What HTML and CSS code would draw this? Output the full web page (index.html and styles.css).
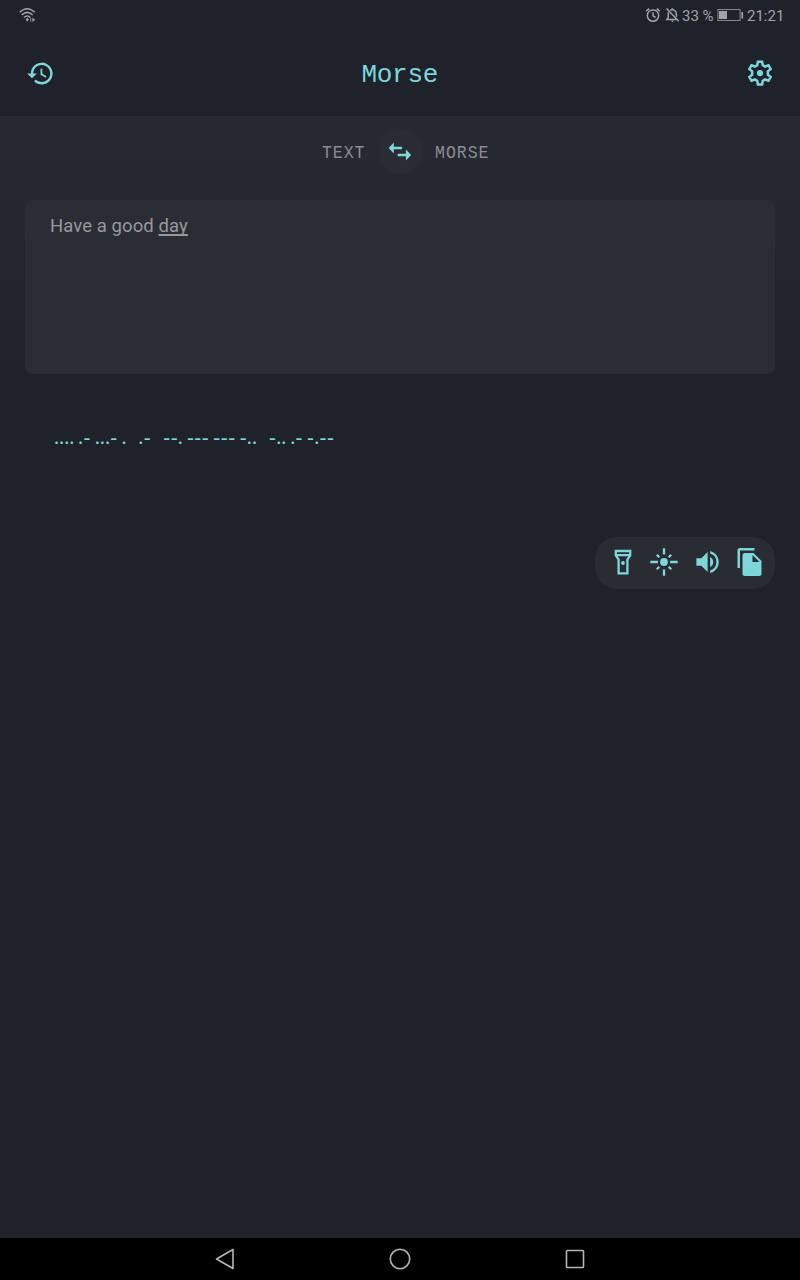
FILE: index.html
```
<!DOCTYPE html>
<html lang="en">
<head>
<meta charset="utf-8">
<title>Morse</title>
<link rel="stylesheet" href="styles.css">
</head>
<body>
<div class="screen">
  <div class="status">
    <svg class="wifi" width="20" height="18" viewBox="0 0 20 18" fill="none" stroke="currentColor" stroke-width="1.5"><path d="M1.600 6.300Q9.200-.8 16.800 6.300M3.700 9Q9.200 3.800 14.700 9M6 11.500Q9.200 8.600 12.400 11.500"/><path d="M7.600 13.600l1.600-1.900 1.800 1.900-1.800 1.900zM14.400 11.600l2.800 2.200-2.800 2.200z" fill="currentColor" stroke="none"/><path d="M12.800 12v3.800" stroke-width=".8"/></svg>
    <div class="status-right">
      <svg width="16" height="16" viewBox="0 0 16 16" fill="none" stroke="currentColor" stroke-width="1.500"><circle cx="8" cy="8.600" r="5.700"/><path d="M8 5.200v3.700l2.600 1.600M1.200 4.100l3-2.500M14.800 4.100l-3-2.500"/></svg>
      <svg class="bell" width="15" height="16" viewBox="0 0 15 16" fill="none" stroke="currentColor" stroke-width="1.500"><path d="M1.500 1.500l12.300 12.800M3.300 5.300v5.200l-1.500 2h10.400M5.200 3.300Q7.300 2 9.500 3.300 11.400 4.500 11.400 7v2.800M7.300 1.200v1.600"/><path d="M5.800 13.600h3.200l-1.600 1.700z" fill="currentColor" stroke="none"/></svg>
      <span class="percent">33 %</span>
      <svg class="battery" width="27" height="12" viewBox="0 0 27 12"><rect x=".9" y=".5" width="22.200" height="11" fill="none" stroke="currentColor" stroke-width="1" opacity=".8"/><path d="M2 2h8v8H2zM24.400 3h1.700v6.500h-1.700z" fill="currentColor"/></svg>
      <span class="time">21:21</span>
    </div>
  </div>
  <header class="bar">
    <svg width="29" height="29" viewBox="0 0 24 24" fill="currentColor"><path d="M13 3a9 9 0 0 0-9 9H1l3.890 3.890.07.14L9 12H6a7 7 0 1 1 2.060 4.940l-1.420 1.420A9 9 0 1 0 13 3zm-1 5v5l4.280 2.540.72-1.210-3.500-2.080V8z"/></svg>
    <h1 class="title">Morse</h1>
    <svg width="30" height="30" viewBox="0 0 24 24" fill="none" stroke="currentColor"><path d="M10.300 2.900h3.400l.5 2.800 1.900 1.100 2.700-1 1.700 3-2.200 1.800v2.800l2.200 1.800-1.700 3-2.700-1-1.900 1.100-.5 2.800h-3.400l-.5-2.800-1.900-1.100-2.700 1-1.700-3 2.200-1.800v-2.800L3.500 8.800l1.700-3 2.700 1 1.900-1.100z" stroke-width="2"/><circle cx="12" cy="12" r="2.500" fill="currentColor" stroke="none"/></svg>
  </header>
  <main class="main">
    <div class="direction">
      <span class="label from">TEXT</span>
      <span class="swap"><svg width="24" height="20" viewBox="0 0 24 20" fill="currentColor"><path d="M.6 6L5.800 .5v4.200h8.200v2.600H5.800v4.200zM23.100 13L17.900 7.500v4.200H9.700v2.600h8.200v4.200z"/></svg></span>
      <span class="label to">MORSE</span>
    </div>
    <div class="input"><span class="words">Have a good <span class="composing">day</span></span></div>
    <div class="output">.... .- ...- .   .-   --. --- --- -..   -.. .- -.--</div>
    <div class="actions">
      <svg width="28" height="28" viewBox="0 0 28 28" fill="none" stroke="currentColor" stroke-width="2.300"><path d="M6.800 3h14.400v4.300l-2.800 4.200v13.800H9.600V11.500L6.800 7.300zM6.800 7.200h14.400"/><circle cx="14" cy="15" r="1.900" fill="currentColor" stroke="none"/></svg>
      <svg width="28" height="28" viewBox="0 0 28 28" fill="none" stroke="currentColor" stroke-width="2.300"><circle cx="14" cy="14" r="3.900" fill="currentColor" stroke="none"/><path d="M14 .3V6.500M14 21.500v6.200M.3 14H8M20 14h7.700M6.800 6.800l2.500 2.500M18.700 18.700l2.500 2.500M21.200 6.800l-2.500 2.500M9.300 18.700l-2.500 2.500"/></svg>
      <svg width="30" height="30" viewBox="0 0 24 24" fill="currentColor"><path d="M3.500 9v6h4l5 5V4l-5 5zM17 12a4.500 4.500 0 0 0-2.500-4.030v8.050A4.500 4.500 0 0 0 17 12zM14.500 3.230v2.060a7 7 0 0 1 0 13.420v2.060a9 9 0 0 0 0-17.540z"/></svg>
      <svg width="28" height="30" viewBox="0 0 28 30" fill="currentColor"><path d="M1.500 21V3.500A2.500 2.500 0 0 1 4 1h14.500v2.500H4V21zM9 6h8.500l8 8v12.500A2.500 2.500 0 0 1 23 29H9a2.500 2.500 0 0 1-2.500-2.500v-18A2.500 2.500 0 0 1 9 6zM16.500 8v7h7z" fill-rule="evenodd"/></svg>
    </div>
  </main>
  <nav class="nav">
    <svg width="22" height="24" viewBox="0 0 22 24"><path d="M19 2.500v19L2.500 12z"/></svg>
    <svg width="24" height="24" viewBox="0 0 24 24"><circle cx="12" cy="12" r="9.700"/></svg>
    <svg width="22" height="24" viewBox="0 0 22 24"><rect x="2.500" y="3.500" width="17" height="17" rx=".8"/></svg>
  </nav>
</div>
</body>
</html>
```
FILE: styles.css
```
* { box-sizing: border-box; }
body { margin: 0; background: #1f222a; }
svg { display: block; flex: none; }
.screen {
  width: 800px;
  height: 1280px;
  display: flex;
  flex-direction: column;
  background: #1f222a;
  color: #7dd6d9;
}
.status {
  height: 30px;
  display: flex;
  justify-content: space-between;
  align-items: center;
  padding: 0 15px 0 18px;
  color: #a0a2a6;
  font: 15px/18px Roboto, sans-serif;
}
.status-right { display: flex; align-items: center; }
.bell { margin-left: 4px; }
.percent { margin-left: 2px; width: 35px; padding-top: 1px; white-space: nowrap; }
.time { margin-left: 3px; width: 38px; padding-top: 1px; white-space: nowrap; }
.bar {
  height: 86px;
  display: flex;
  align-items: center;
  justify-content: space-between;
  padding: 0 25px 0 25.5px;
}
.title {
  margin: 0;
  padding-top: 4px;
  font: 400 26px/32px "Liberation Mono", monospace;
  letter-spacing: -0.3px;
}
.main {
  flex: 1;
  padding: 13px 25px 0;
  display: flex;
  flex-direction: column;
  background: linear-gradient(#272a32, #1f222a 285px);
}
.direction {
  display: grid;
  grid-template-columns: 1fr 45px 1fr;
  align-items: center;
  column-gap: 13px;
  color: #8c8d92;
}
/* Condensed capitals with open tracking */
.label {
  padding-top: 2px;
  font: 19px/20px "Liberation Mono", monospace;
  letter-spacing: 1.1px;
  transform: scaleX(0.87);
}
.from { margin-right: -1px; text-align: right; transform-origin: right; }
.to { margin-left: -0.5px; transform-origin: left; }
.swap {
  width: 45px;
  height: 45px;
  border-radius: 50%;
  background: #2a2c33;
  color: #7dd6d9;
  display: flex;
  align-items: center;
  justify-content: center;
}
.input {
  margin-top: 26px;
  height: 173.5px;
  padding: 15px 25px;
  border-radius: 8px;
  background: #2b2d34;
  color: #97989d;
  font: 18.5px/22px Roboto, sans-serif;
  letter-spacing: 0.08px;
}
.composing {
  text-decoration: underline;
  text-decoration-thickness: 1.5px;
  text-underline-offset: 2px;
  text-decoration-skip-ink: none;
}
.output {
  margin-top: 52.5px;
  padding-left: 29px;
  height: 24px;
  white-space: pre;
  font: 600 16px/24px Inter, sans-serif;
}
.actions {
  margin-top: 86.5px;
  align-self: flex-end;
  width: 180px;
  height: 52px;
  padding: 0 11px 1px 13.5px;
  border-radius: 22px;
  background: #2a2c33;
  display: flex;
  align-items: center;
  justify-content: space-between;
}
.nav {
  height: 42px;
  background: #000;
  display: flex;
  align-items: center;
  justify-content: center;
  gap: 152px;
}
.nav svg { fill: none; stroke: #b5b5b5; stroke-width: 1.6; stroke-linejoin: round; }
```
